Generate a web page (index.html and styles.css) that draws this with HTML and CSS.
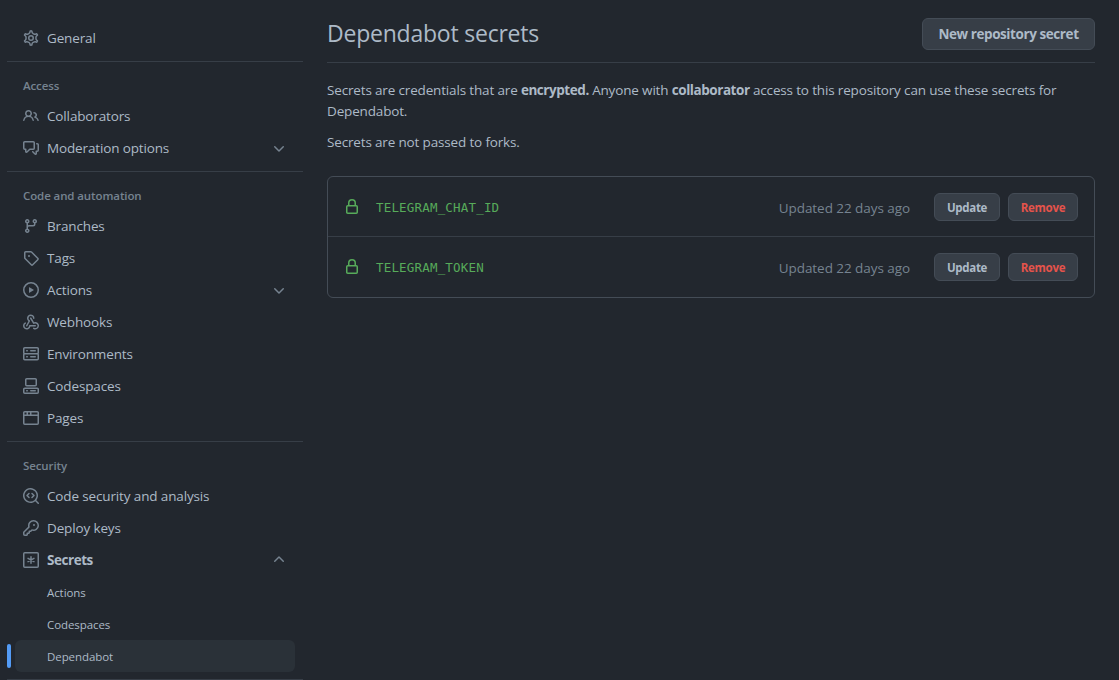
FILE: index.html
```html
<!DOCTYPE html>
<html lang="en">
<head>
<meta charset="utf-8">
<title>Dependabot secrets</title>
<link rel="stylesheet" href="styles.css">
</head>
<body>
<div class="layout">
<nav class="sidebar">
  <a class="item"><svg class="icon" viewBox="0 0 16 16"><g fill="none" stroke="currentColor" stroke-width="1.36" transform="translate(-.8 -.8) scale(1.1)"><path d="M7.429 1.525a6.593 6.593 0 011.142 0c.036.003.108.036.137.146l.289 1.105c.147.56.55.967.997 1.189.174.086.341.183.501.29.417.278.97.423 1.53.27l1.102-.303c.11-.03.175.016.195.046.219.31.41.641.573.989.014.031.022.11-.059.19l-.815.806c-.411.406-.562.957-.53 1.456a4.588 4.588 0 010 .582c-.032.499.119 1.05.53 1.456l.815.806c.08.08.073.159.059.19a6.494 6.494 0 01-.573.99c-.02.029-.086.074-.195.045l-1.103-.303c-.559-.153-1.112-.008-1.529.27-.16.107-.327.204-.5.29-.449.222-.851.628-.998 1.189l-.289 1.105c-.029.11-.101.143-.137.146a6.613 6.613 0 01-1.142 0c-.036-.003-.108-.037-.137-.146l-.289-1.105c-.147-.56-.55-.967-.997-1.189a4.502 4.502 0 01-.501-.29c-.417-.278-.97-.423-1.53-.27l-1.102.303c-.11.03-.175-.016-.195-.046a6.492 6.492 0 01-.573-.989c-.014-.031-.022-.11.059-.19l.815-.806c.411-.406.562-.957.53-1.456a4.587 4.587 0 010-.582c.032-.499-.119-1.05-.53-1.456l-.815-.806c-.08-.08-.073-.159-.059-.19a6.44 6.44 0 01.573-.99c.02-.029.086-.075.195-.045l1.103.303c.559.153 1.112.008 1.529-.27.16-.107.327-.204.5-.29.449-.222.851-.628.998-1.189l.289-1.105c.029-.11.101-.143.137-.146z"/><circle cx="8" cy="8" r="2.05"/></g></svg><span class="label">General</span></a>
  <div class="divider"></div>
  <h2 class="heading">Access</h2>
  <a class="item"><svg class="icon" viewBox="0 0 16 16"><path d="M5.5 3.5a2 2 0 100 4 2 2 0 000-4zM2 5.5a3.5 3.5 0 115.898 2.549 5.507 5.507 0 013.034 4.084.75.75 0 11-1.482.235 4.001 4.001 0 00-7.9 0 .75.75 0 01-1.482-.236A5.507 5.507 0 013.102 8.05 3.49 3.49 0 012 5.5zM11 4a.75.75 0 100 1.5 1.5 1.5 0 01.666 2.844.75.75 0 00-.416.672v.352a.75.75 0 00.574.73c1.2.289 2.162 1.2 2.522 2.372a.75.75 0 101.434-.44 5.01 5.01 0 00-2.56-3.012A3 3 0 0011 4z"/></svg><span class="label">Collaborators</span></a>
  <a class="item"><svg class="icon" viewBox="0 0 16 16"><path d="M1.75 1h8.5c.966 0 1.75.784 1.75 1.75v5.5A1.75 1.75 0 0 1 10.25 10H7.061l-2.574 2.573A1.458 1.458 0 0 1 2 11.543V10h-.25A1.75 1.75 0 0 1 0 8.25v-5.5C0 1.784.784 1 1.75 1ZM1.5 2.75v5.5c0 .138.112.25.25.25h1a.75.75 0 0 1 .75.75v2.19l2.72-2.72a.749.749 0 0 1 .53-.22h3.5a.25.25 0 0 0 .25-.25v-5.5a.25.25 0 0 0-.25-.25h-8.5a.25.25 0 0 0-.25.25Zm13 2a.25.25 0 0 0-.25-.25h-.5a.75.75 0 0 1 0-1.5h.5c.966 0 1.75.784 1.75 1.75v5.5A1.75 1.75 0 0 1 14.25 12H14v1.543a1.458 1.458 0 0 1-2.487 1.03L9.22 12.28a.749.749 0 0 1 .326-1.275.749.749 0 0 1 .734.215l2.22 2.22v-2.19a.75.75 0 0 1 .75-.75h1a.25.25 0 0 0 .25-.25Z"/></svg><span class="label">Moderation options</span><svg class="icon" viewBox="0 0 16 16"><path d="M12.78 6.22a.749.749 0 0 1 0 1.06l-4.25 4.25a.749.749 0 0 1-1.06 0L3.22 7.28a.749.749 0 1 1 1.06-1.06L8 9.939l3.72-3.719a.749.749 0 0 1 1.06 0Z"/></svg></a>
  <div class="divider"></div>
  <h2 class="heading">Code and automation</h2>
  <a class="item"><svg class="icon" viewBox="0 0 16 16"><path d="M9.5 3.25a2.25 2.25 0 1 1 3 2.122V6A2.5 2.5 0 0 1 10 8.5H6a1 1 0 0 0-1 1v1.128a2.251 2.251 0 1 1-1.5 0V5.372a2.25 2.25 0 1 1 1.5 0v1.836A2.493 2.493 0 0 1 6 7h4a1 1 0 0 0 1-1v-.628A2.25 2.25 0 0 1 9.5 3.25Zm-6 0a.75.75 0 1 0 1.5 0 .75.75 0 0 0-1.5 0Zm8.25-.75a.75.75 0 1 0 0 1.5.75.75 0 0 0 0-1.5ZM4.25 12a.75.75 0 1 0 0 1.5.75.75 0 0 0 0-1.5Z"/></svg><span class="label">Branches</span></a>
  <a class="item"><svg class="icon" viewBox="0 0 16 16"><path d="M1 7.775V2.75C1 1.784 1.784 1 2.75 1h5.025c.464 0 .91.184 1.238.513l6.25 6.25a1.75 1.75 0 0 1 0 2.474l-5.026 5.026a1.75 1.75 0 0 1-2.474 0l-6.25-6.25A1.752 1.752 0 0 1 1 7.775Zm1.5 0c0 .066.026.13.073.177l6.25 6.25a.25.25 0 0 0 .354 0l5.025-5.025a.25.25 0 0 0 0-.354l-6.25-6.25a.25.25 0 0 0-.177-.073H2.75a.25.25 0 0 0-.25.25ZM6 5a1 1 0 1 1 0 2 1 1 0 0 1 0-2Z"/></svg><span class="label">Tags</span></a>
  <a class="item"><svg class="icon" viewBox="0 0 16 16"><path d="M8 0a8 8 0 1 1 0 16A8 8 0 0 1 8 0ZM1.5 8a6.5 6.5 0 1 0 13 0 6.5 6.5 0 0 0-13 0Zm4.879-2.773 4.264 2.559a.25.25 0 0 1 0 .428l-4.264 2.559A.25.25 0 0 1 6 10.559V5.442a.25.25 0 0 1 .379-.215Z"/></svg><span class="label">Actions</span><svg class="icon" viewBox="0 0 16 16"><path d="M12.78 6.22a.749.749 0 0 1 0 1.06l-4.25 4.25a.749.749 0 0 1-1.06 0L3.22 7.28a.749.749 0 1 1 1.06-1.06L8 9.939l3.72-3.719a.749.749 0 0 1 1.06 0Z"/></svg></a>
  <a class="item"><svg class="icon" viewBox="0 0 16 16"><path d="M5.5 4.25a2.25 2.25 0 014.5 0 .75.75 0 001.5 0 3.75 3.75 0 10-6.14 2.889l-2.272 4.258a.75.75 0 001.324.706L7 7.25a.75.75 0 00-.309-1.015A2.25 2.25 0 015.5 4.25z"/><path d="M7.364 3.607a.75.75 0 011.03.257l2.608 4.349a3.75 3.75 0 11-.628 6.785.75.75 0 01.752-1.299 2.25 2.25 0 10-.033-3.88.75.75 0 01-1.03-.256L7.107 4.636a.75.75 0 01.257-1.03z"/><path d="M2.9 8.776A.75.75 0 012.625 9.8 2.25 2.25 0 106 11.75a.75.75 0 01.75-.751h5.5a.75.75 0 010 1.5H7.425a3.751 3.751 0 11-5.55-3.998.75.75 0 011.024.274z"/></svg><span class="label">Webhooks</span></a>
  <a class="item"><svg class="icon" viewBox="0 0 16 16"><path d="M1.75 1h12.5c.966 0 1.75.784 1.75 1.75v4c0 .372-.116.717-.314 1 .198.283.314.628.314 1v4a1.75 1.75 0 0 1-1.75 1.75H1.75A1.75 1.75 0 0 1 0 12.75v-4c0-.358.109-.707.314-1a1.739 1.739 0 0 1-.314-1v-4C0 1.784.784 1 1.75 1ZM1.5 2.75v4c0 .138.112.25.25.25h12.5a.25.25 0 0 0 .25-.25v-4a.25.25 0 0 0-.25-.25H1.75a.25.25 0 0 0-.25.25Zm.25 5.75a.25.25 0 0 0-.25.25v4c0 .138.112.25.25.25h12.5a.25.25 0 0 0 .25-.25v-4a.25.25 0 0 0-.25-.25ZM7 4.75A.75.75 0 0 1 7.75 4h4.5a.75.75 0 0 1 0 1.5h-4.5A.75.75 0 0 1 7 4.75ZM7.75 10h4.5a.75.75 0 0 1 0 1.5h-4.5a.75.75 0 0 1 0-1.5ZM3 4.75A.75.75 0 0 1 3.75 4h.5a.75.75 0 0 1 0 1.5h-.5A.75.75 0 0 1 3 4.75ZM3.75 10h.5a.75.75 0 0 1 0 1.5h-.5a.75.75 0 0 1 0-1.5Z"/></svg><span class="label">Environments</span></a>
  <a class="item"><svg class="icon" viewBox="0 0 16 16"><path d="M0 11.25c0-.966.784-1.75 1.75-1.75h12.5c.966 0 1.75.784 1.75 1.75v3A1.75 1.75 0 0 1 14.25 16H1.75A1.75 1.75 0 0 1 0 14.25Zm2-9.5C2 .784 2.784 0 3.75 0h8.5C13.216 0 14 .784 14 1.75v5a1.75 1.75 0 0 1-1.75 1.75h-8.5A1.75 1.75 0 0 1 2 6.75Zm1.75-.25a.25.25 0 0 0-.25.25v5c0 .138.112.25.25.25h8.5a.25.25 0 0 0 .25-.25v-5a.25.25 0 0 0-.25-.25Zm-2 9.5a.25.25 0 0 0-.25.25v3c0 .138.112.25.25.25h12.5a.25.25 0 0 0 .25-.25v-3a.25.25 0 0 0-.25-.25Z"/><path d="M7 12.75a.75.75 0 0 1 .75-.75h4.5a.75.75 0 0 1 0 1.5h-4.5a.75.75 0 0 1-.75-.75Zm-4 0a.75.75 0 0 1 .75-.75h.5a.75.75 0 0 1 0 1.5h-.5a.75.75 0 0 1-.75-.75Z"/></svg><span class="label">Codespaces</span></a>
  <a class="item"><svg class="icon" viewBox="0 0 16 16"><path d="M0 2.75C0 1.784.784 1 1.75 1h12.5c.966 0 1.75.784 1.75 1.75v10.5A1.75 1.75 0 0 1 14.25 15H1.75A1.75 1.75 0 0 1 0 13.25ZM14.5 6h-13v7.25c0 .138.112.25.25.25h12.5a.25.25 0 0 0 .25-.25Zm-6-3.5v2h6V2.75a.25.25 0 0 0-.25-.25ZM5 2.5v2h2v-2Zm-3.25 0a.25.25 0 0 0-.25.25V4.5h2v-2Z"/></svg><span class="label">Pages</span></a>
  <div class="divider"></div>
  <h2 class="heading">Security</h2>
  <a class="item"><svg class="icon" viewBox="0 0 16 16"><path d="M8.47 4.97a.75.75 0 0 0 0 1.06L9.94 7.5 8.47 8.97a.75.75 0 1 0 1.06 1.06l2-2a.75.75 0 0 0 0-1.06l-2-2a.75.75 0 0 0-1.06 0ZM6.53 6.03a.75.75 0 0 0-1.06-1.06l-2 2a.75.75 0 0 0 0 1.06l2 2a.75.75 0 1 0 1.06-1.06L5.06 7.5l1.47-1.47Z"/><path d="M12.246 13.307a7.501 7.501 0 1 1 1.06-1.06l2.474 2.473a.749.749 0 1 1-1.06 1.06ZM1.5 7.5a6.002 6.002 0 0 0 3.608 5.504 6.002 6.002 0 0 0 6.486-1.117.748.748 0 0 1 .292-.293A6 6 0 1 0 1.5 7.5Z"/></svg><span class="label">Code security and analysis</span></a>
  <a class="item"><svg class="icon" viewBox="0 0 16 16"><path d="M10.5 0a5.499 5.499 0 1 1-1.288 10.848l-.932.932a.749.749 0 0 1-.53.22H7v.75a.749.749 0 0 1-.22.53l-.5.5a.749.749 0 0 1-.53.22H5v.75a.749.749 0 0 1-.22.53l-.5.5a.749.749 0 0 1-.53.22h-2A1.75 1.75 0 0 1 0 14.25v-2c0-.199.079-.389.22-.53l4.932-4.932A5.5 5.5 0 0 1 10.5 0Zm-4 5.5c-.001.431.069.86.205 1.269a.75.75 0 0 1-.181.768L1.5 12.56v1.69c0 .138.112.25.25.25h1.69l.06-.06v-1.19a.75.75 0 0 1 .75-.75h1.19l.06-.06v-1.19a.75.75 0 0 1 .75-.75h1.19l1.023-1.025a.75.75 0 0 1 .768-.18A4 4 0 1 0 6.5 5.5ZM11 6a1 1 0 1 1 0-2 1 1 0 0 1 0 2Z"/></svg><span class="label">Deploy keys</span></a>
  <a class="item"><svg class="icon" viewBox="0 0 16 16"><g fill="none" stroke="currentColor" stroke-width="1.5"><rect x=".75" y=".75" width="14.5" height="14.5" rx="1"/><path stroke-linecap="round" d="M8 4.75v6.5M5.05 6.3l5.9 3.4M5.05 9.7l5.9-3.4"/></g></svg><span class="label label-strong">Secrets</span><svg class="icon flipped" viewBox="0 0 16 16"><path d="M12.78 6.22a.749.749 0 0 1 0 1.06l-4.25 4.25a.749.749 0 0 1-1.06 0L3.22 7.28a.749.749 0 1 1 1.06-1.06L8 9.939l3.72-3.719a.749.749 0 0 1 1.06 0Z"/></svg></a>
  <a class="subitem">Actions</a>
  <a class="subitem">Codespaces</a>
  <a class="subitem current">Dependabot</a>
  <div class="divider"></div>
</nav>
<main class="content">
  <header class="page-head">
    <h1 class="title">Dependabot secrets</h1>
    <button class="btn btn-primary">New repository secret</button>
  </header>
  <p class="text intro">Secrets are credentials that are <b>encrypted.</b> Anyone with <b>collaborator</b> access to this repository can use these secrets for<br>Dependabot.</p>
  <p class="text note">Secrets are not passed to forks.</p>
  <div class="box">
    <div class="row">
      <svg class="icon lock" viewBox="0 0 16 16"><path fill-rule="evenodd" d="M4 4v2h-.25A1.75 1.75 0 002 7.75v5.5c0 .966.784 1.75 1.75 1.75h8.5A1.75 1.75 0 0014 13.25v-5.5A1.75 1.75 0 0012.25 6H12V4a4 4 0 10-8 0zm6.5 2V4a2.5 2.5 0 00-5 0v2h5zM12 7.5h.25a.25.25 0 01.25.25v5.5a.25.25 0 01-.25.25h-8.5a.25.25 0 01-.25-.25v-5.5a.25.25 0 01.25-.25H12z"/></svg>
      <code class="name">TELEGRAM_CHAT_ID</code>
      <span class="updated">Updated 22 days ago</span>
      <button class="btn btn-sm btn-update">Update</button>
      <button class="btn btn-sm btn-danger">Remove</button>
    </div>
    <div class="row">
      <svg class="icon lock" viewBox="0 0 16 16"><path fill-rule="evenodd" d="M4 4v2h-.25A1.75 1.75 0 002 7.75v5.5c0 .966.784 1.75 1.75 1.75h8.5A1.75 1.75 0 0014 13.25v-5.5A1.75 1.75 0 0012.25 6H12V4a4 4 0 10-8 0zm6.5 2V4a2.5 2.5 0 00-5 0v2h5zM12 7.5h.25a.25.25 0 01.25.25v5.5a.25.25 0 01-.25.25h-8.5a.25.25 0 01-.25-.25v-5.5a.25.25 0 01.25-.25H12z"/></svg>
      <code class="name">TELEGRAM_TOKEN</code>
      <span class="updated">Updated 22 days ago</span>
      <button class="btn btn-sm btn-update">Update</button>
      <button class="btn btn-sm btn-danger">Remove</button>
    </div>
  </div>
</main>
</div>
</body>
</html>
```

FILE: styles.css
```css
* { box-sizing: border-box; }
html, body { height: 100%; }
body {
  margin: 0;
  overflow: hidden;
  background: #22272e;
  color: #adbac7;
  font: 13.5px/21px "Open Sans", "Noto Sans", sans-serif;
  letter-spacing: -0.14px;
}
.layout {
  display: grid;
  grid-template-columns: 296px 768px;
  column-gap: 24px;
  padding-left: 7px;
}
.sidebar { padding-top: 22px; }
.item {
  display: flex;
  align-items: center;
  height: 32px;
  padding: 0 16px;
}
.icon {
  flex: none;
  width: 16px;
  height: 16px;
  fill: currentColor;
  color: #768390;
}
.label { flex: 1; margin-left: 8px; }
.label-strong { font-weight: 700; letter-spacing: -0.45px; }
.flipped { transform: rotate(180deg); }
.divider { height: 1px; margin-top: 7px; background: #373e47; }
.heading {
  height: 38px;
  margin: 0;
  padding: 15px 16px 5px;
  font-size: 11.5px;
  line-height: 18px;
  font-weight: 600;
  letter-spacing: -0.1px;
  color: #768390;
}
.subitem {
  display: flex;
  align-items: center;
  position: relative;
  height: 32px;
  margin: 0 8px;
  padding-left: 32px;
  border-radius: 6px;
  font-size: 11.5px;
  letter-spacing: -0.08px;
}
.current { background: #2a3138; }
.current::before {
  content: "";
  position: absolute;
  left: -8px;
  top: 4px;
  width: 4px;
  height: 24px;
  border-radius: 2px;
  background: #539bf5;
}
.page-head {
  display: flex;
  justify-content: space-between;
  align-items: flex-start;
  height: 63px;
  padding-top: 18px;
  border-bottom: 1px solid #373e47;
}
.title {
  margin: 0;
  font-size: 23px;
  line-height: 30px;
  font-weight: 400;
  letter-spacing: -0.22px;
}
.btn {
  padding: 0;
  border: 1px solid #444c56;
  border-radius: 6px;
  background: #373e47;
  color: #adbac7;
  font: 700 13.5px/20px "Open Sans", "Noto Sans", sans-serif;
  letter-spacing: -0.42px;
}
.btn-primary { width: 173px; height: 32px; }
.btn-sm { height: 28px; font-size: 11.5px; letter-spacing: -0.3px; padding-top: 1px; }
.btn-update { width: 66px; }
.btn-danger { width: 70px; margin-left: 8px; color: #e5534b; }
.text { margin: 0; letter-spacing: -0.16px; }
.text b { font-weight: 700; letter-spacing: -0.45px; }
.intro { padding-top: 17px; }
.note { padding-top: 10px; }
.box {
  margin-top: 23px;
  border: 1px solid #444c56;
  border-radius: 6px;
}
.row {
  display: flex;
  align-items: center;
  height: 60px;
  padding: 0 16px;
}
.row:first-child { border-bottom: 1px solid #373e47; padding-top: 1px; }
.lock { color: #57ab5a; }
.name {
  margin-left: 16px;
  padding-top: 2px;
  font: 12.5px/20px "DejaVu Sans Mono", monospace;
  letter-spacing: 0.18px;
  color: #57ab5a;
}
.updated { margin: 0 24px 0 auto; padding-top: 2px; letter-spacing: -0.06px; color: #768390; }
```
